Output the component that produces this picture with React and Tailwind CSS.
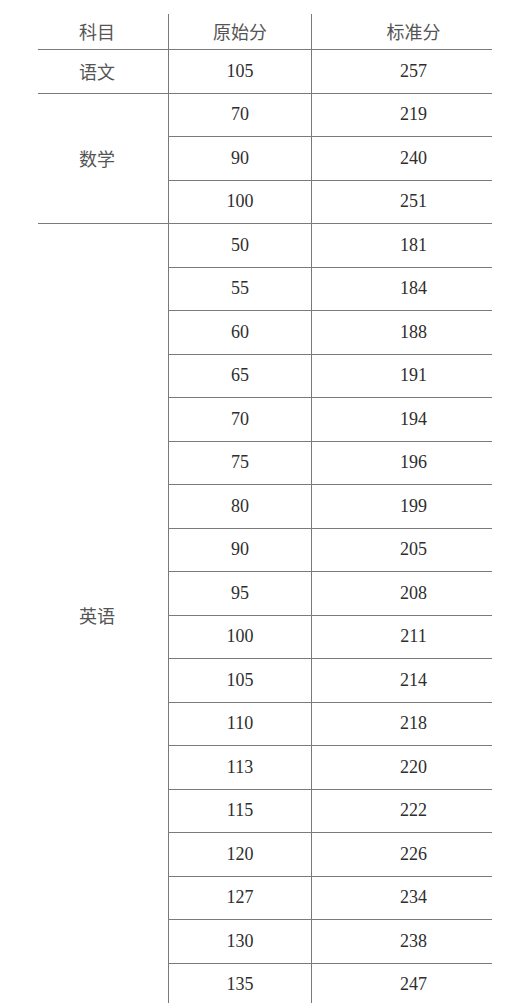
import React from "react";

const groups = [
  { name: "语文", rows: [["105", "257"]] },
  { name: "数学", rows: [["70", "219"], ["90", "240"], ["100", "251"]] },
  {
    name: "英语",
    rows: [
      ["50", "181"], ["55", "184"], ["60", "188"], ["65", "191"], ["70", "194"],
      ["75", "196"], ["80", "199"], ["90", "205"], ["95", "208"], ["100", "211"],
      ["105", "214"], ["110", "218"], ["113", "220"], ["115", "222"], ["120", "226"],
      ["127", "234"], ["130", "238"], ["135", "247"],
    ],
  },
];

const cjk = { fontFamily: '"Noto Sans CJK SC", sans-serif' };
const num = { fontFamily: '"Liberation Serif", serif' };

export default function App() {
  return (
    <div className="w-[512px] h-[1003px] overflow-hidden bg-white">
      <div className="ml-[38px] mt-[14px] w-[454px]">
        <div className="flex h-[35px] text-[18px] text-[#555]" style={cjk}>
          <div className="w-[130px] flex items-center justify-center pr-[12px]">科目</div>
          <div className="w-[143px] flex items-center justify-center border-l border-[#7a7a7a]">原始分</div>
          <div className="flex-1 flex items-center justify-center border-l border-[#7a7a7a] pl-[23px]">标准分</div>
        </div>
        {groups.map((g) => (
          <div key={g.name} className="flex">
            <div
              className="w-[130px] flex items-center justify-center pr-[12px] border-t border-[#7a7a7a] text-[18px] text-[#555]"
              style={cjk}
            >
              {g.name}
            </div>
            <div className="flex-1 flex flex-col">
              {g.rows.map(([a, b], i) => (
                <div
                  key={i}
                  className="flex h-[43.5px] border-t border-[#7a7a7a] text-[18px] text-[#2e2e2e]"
                  style={num}
                >
                  <div className="w-[143px] flex items-center justify-center border-l border-[#7a7a7a]">{a}</div>
                  <div className="flex-1 flex items-center justify-center border-l border-[#7a7a7a] pl-[23px]">{b}</div>
                </div>
              ))}
            </div>
          </div>
        ))}
      </div>
    </div>
  );
}
